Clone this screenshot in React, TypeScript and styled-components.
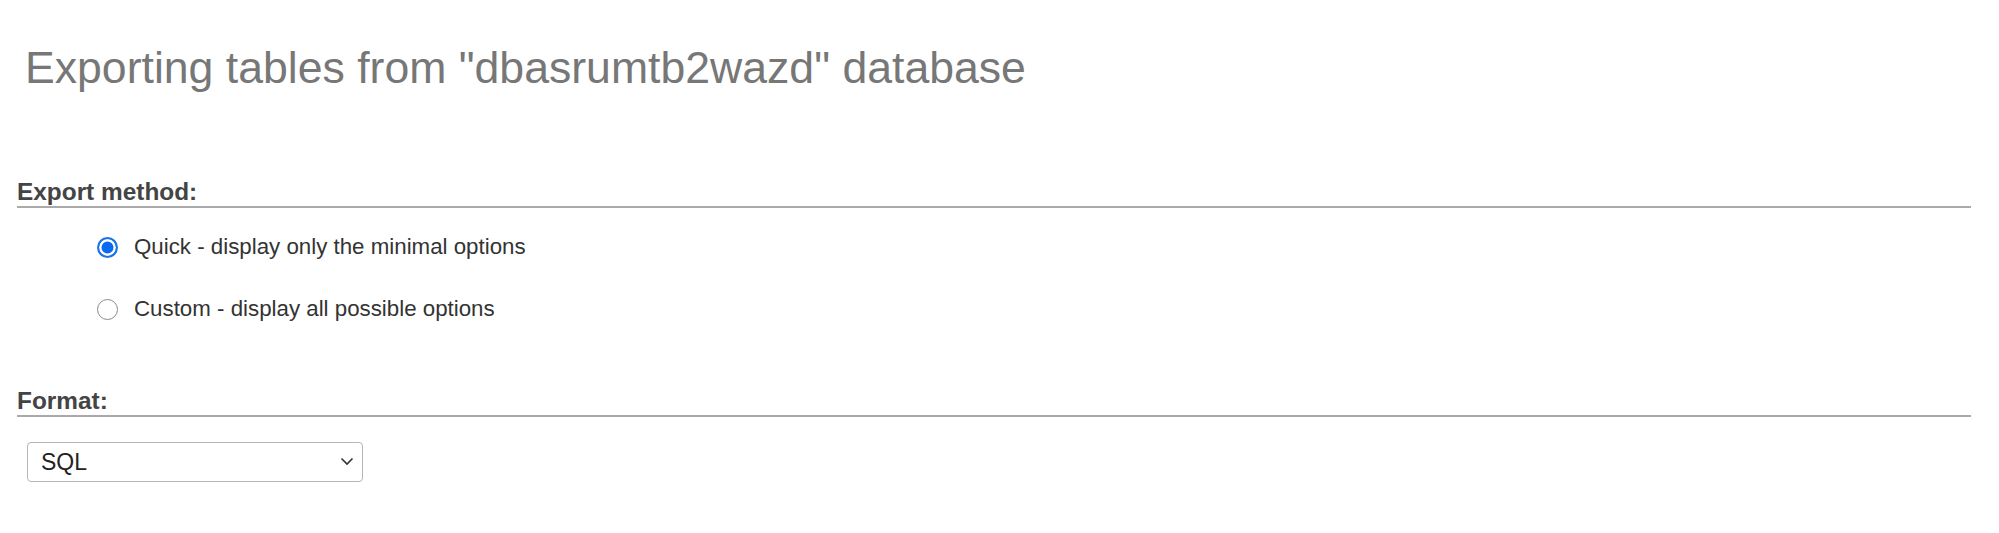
import styled, { createGlobalStyle } from "styled-components";

const GlobalStyle = createGlobalStyle`
  html, body {
    margin: 0;
    padding: 0;
    background: #fff;
    font-family: "Liberation Sans", Arial, sans-serif;
  }
`;

const Page = styled.div`
  padding: 0 28px 40px 17px;
`;

const Title = styled.h2`
  margin: 0 0 84px 8px;
  padding-top: 42px;
  font-size: 44.6px;
  line-height: 52px;
  font-weight: normal;
  color: #777;
`;

const Fieldset = styled.div<{ $gap?: number }>`
  margin-bottom: ${(p) => p.$gap ?? 0}px;
`;

const Legend = styled.div`
  font-size: 24.4px;
  line-height: 28px;
  font-weight: bold;
  color: #444;
  border-bottom: 2px solid #aaa;
`;

const RadioList = styled.div`
  display: flex;
  flex-direction: column;
  gap: 32px;
  margin: 24px 0 0 80px;
`;

const RadioRow = styled.label`
  display: flex;
  align-items: center;
  gap: 16px;
  height: 30px;
  font-size: 22.3px;
  color: #333;
`;

const Radio = styled.input`
  appearance: none;
  margin: 0;
  width: 21px;
  height: 21px;
  border-radius: 50%;
  border: 1.5px solid #8a8a8a;
  background: #fff;
  box-sizing: border-box;
  &:checked {
    border: 2.5px solid #1a73e8;
    box-shadow: inset 0 0 0 2.5px #fff;
    background: #0b69f0;
  }
`;

const SelectWrap = styled.div`
  position: relative;
  width: 336px;
  height: 40px;
  margin: 25px 0 0 10px;
`;

const Select = styled.select`
  appearance: none;
  width: 100%;
  height: 100%;
  box-sizing: border-box;
  border: 1px solid #b5b5b5;
  border-radius: 4px;
  background: #fff;
  padding: 0 0 0 13px;
  font-family: "Liberation Sans", Arial, sans-serif;
  font-size: 23px;
  color: #222;
`;

const Chevron = styled.svg`
  position: absolute;
  right: 9px;
  top: 15px;
  pointer-events: none;
`;

export default function App() {
  return (
    <>
      <GlobalStyle />
      <Page>
        <Title>Exporting tables from "dbasrumtb2wazd" database</Title>
        <Fieldset $gap={63}>
          <Legend>Export method:</Legend>
          <RadioList>
            <RadioRow>
              <Radio type="radio" name="method" defaultChecked />
              Quick - display only the minimal options
            </RadioRow>
            <RadioRow>
              <Radio type="radio" name="method" />
              Custom - display all possible options
            </RadioRow>
          </RadioList>
        </Fieldset>
        <Fieldset>
          <Legend>Format:</Legend>
          <SelectWrap>
            <Select defaultValue="sql">
              <option value="sql">SQL</option>
            </Select>
            <Chevron width="14" height="9" viewBox="0 0 14 9">
              <path d="M1.5 1.5 L7 7 L12.5 1.5" fill="none" stroke="#333" strokeWidth="1.6" />
            </Chevron>
          </SelectWrap>
        </Fieldset>
      </Page>
    </>
  );
}
